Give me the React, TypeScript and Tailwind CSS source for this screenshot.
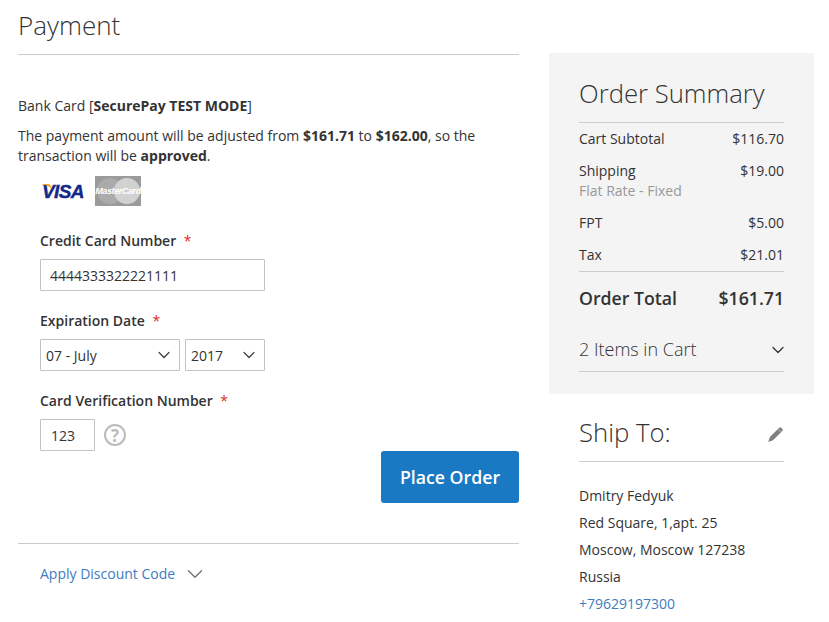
import { ChevronDown } from 'lucide-react';

const ROWS = [
    { label: 'Cart Subtotal', value: '$116.70' },
    { label: 'Shipping', sub: 'Flat Rate - Fixed', value: '$19.00' },
    { label: 'FPT', value: '$5.00' },
    { label: 'Tax', value: '$21.01' },
];

const ADDRESS = ['Dmitry Fedyuk', 'Red Square, 1,apt. 25', 'Moscow, Moscow 127238', 'Russia'];

function Field({ label, children }: { label: string; children: React.ReactNode }) {
    return (
        <div>
            <div className="h-[20px] leading-[20px] font-semibold text-[14px] text-[#333]">
                {label}
                <span className="ml-[4px] text-[#e02b27] font-normal"> *</span>
            </div>
            <div className="mt-[8px]">{children}</div>
        </div>
    );
}

function SelectBox({ value, width }: { value: string; width: string }) {
    return (
        <div className={`${width} h-[32px] border border-[#c2c2c2] rounded-[1px] flex items-center justify-between pl-[5px] pr-[5px] text-[14px] text-[#333]`}>
            <span>{value}</span>
            <ChevronDown className="w-[20px] h-[20px] text-[#444]" strokeWidth={1.5} />
        </div>
    );
}

function CardLogos() {
    return (
        <div className="ml-[24px] mt-[10px] h-[30px] flex items-center gap-[11px]">
            <div className="relative w-[42px] h-[30px] pt-[1px] flex items-center justify-center">
                <span className="text-[19px] leading-[18px] font-bold italic text-[#14288a] tracking-[-0.6px] [-webkit-text-stroke:0.4px_#14288a] font-['Liberation_Sans',sans-serif]">VISA</span>
                <svg className="absolute left-0 top-[8px]" width="10" height="6" viewBox="0 0 10 6">
                    <path d="M0 0h6.5q2 0 2.7 2.5l.4 2.5Q7 1.5 0 .6z" fill="#f2a51c" />
                </svg>
            </div>
            <div className="relative w-[46px] h-[30px] bg-[#9b9b9b] overflow-hidden flex items-center justify-center">
                <div className="absolute left-[2px] top-[2px] w-[26px] h-[26px] rounded-full bg-[#ababab]" />
                <div className="absolute left-[19px] top-[2px] w-[26px] h-[26px] rounded-full bg-[#d2d2d2]" />
                <span className="relative text-[9px] leading-[10px] font-bold italic text-white tracking-[-0.4px] font-['Liberation_Sans',sans-serif]">MasterCard</span>
            </div>
        </div>
    );
}

function PaymentColumn() {
    return (
        <div className="w-[501px] shrink-0">
            <h1 className="h-[55px] pt-[8px] border-b border-[#ccc] text-[26px] leading-[34px] font-light text-[#333]">Payment</h1>

            <p className="mt-[41px] text-[14px] leading-[20px] text-[#333]">
                Bank Card [<b className="font-bold">SecurePay TEST MODE</b>]
            </p>
            <p className="mt-[10px] text-[14px] leading-[20px] text-[#333]">
                The payment amount will be adjusted from <b className="font-bold">$161.71</b> to <b className="font-bold">$162.00</b>, so the transaction will be <b className="font-bold">approved</b>.
            </p>

            <CardLogos />

            <div className="ml-[22px] mt-[25px] flex flex-col gap-[20px]">
                <Field label="Credit Card Number">
                    <div className="w-[225px] h-[32px] border border-[#c2c2c2] rounded-[1px] pl-[9px] flex items-center text-[14px] text-[#333]">4444333322221111</div>
                </Field>
                <Field label="Expiration Date">
                    <div className="flex gap-[5px]">
                        <SelectBox value="07 - July" width="w-[140px]" />
                        <SelectBox value="2017" width="w-[80px]" />
                    </div>
                </Field>
                <Field label="Card Verification Number">
                    <div className="flex items-center gap-[9px]">
                        <div className="w-[55px] h-[32px] border border-[#c2c2c2] rounded-[1px] pl-[10px] flex items-center text-[14px] text-[#333]">123</div>
                        <div className="w-[22px] h-[22px] rounded-full border-2 border-[#bbb] flex items-center justify-center text-[17px] leading-none font-bold text-[#bbb]">?</div>
                    </div>
                </Field>
            </div>

            <div className="flex justify-end">
                <button className="h-[52px] w-[138px] bg-[#1979c3] rounded-[3px] text-white text-[17.7px] font-semibold">Place Order</button>
            </div>

            <div className="mt-[40px] border-t border-[#ccc] h-[59px] pl-[22px] flex items-center gap-[7px]">
                <span className="text-[14px] text-[#3f7cc0]">Apply Discount Code</span>
                <ChevronDown className="w-[26px] h-[26px] mt-[2px] text-[#757575]" strokeWidth={1.3} />
            </div>
        </div>
    );
}

function SummaryColumn() {
    return (
        <div className="w-[265px] shrink-0 ml-[30px] pt-[53px]">
            <div className="bg-[#f4f4f4] h-[341px] px-[30px] pt-[22px]">
                <h2 className="h-[48px] border-b border-[#ccc] text-[25.7px] leading-[38px] font-light text-[#333]">Order Summary</h2>
                <div className="pt-[6px] h-[149px] border-b border-[#ccc] flex flex-col gap-[12px] text-[14px] leading-[20px] text-[#333]">
                    {ROWS.map(r => (
                        <div key={r.label} className="flex justify-between">
                            <div>
                                <div>{r.label}</div>
                                {r.sub && <div className="text-[#999]">{r.sub}</div>}
                            </div>
                            <span>{r.value}</span>
                        </div>
                    ))}
                </div>
                <div className="h-[52px] flex items-center justify-between text-[17.7px] font-semibold text-[#333]">
                    <span>Order Total</span>
                    <span>$161.71</span>
                </div>
                <div className="h-[48px] pt-[4px] border-b border-[#ccc] flex items-center justify-between text-[18px] font-light text-[#333]">
                    <span>2 Items in Cart</span>
                    <ChevronDown className="w-[20px] h-[20px] -mr-[4px] text-[#333]" strokeWidth={1.5} />
                </div>
            </div>
            <div className="px-[30px]">
                <div className="h-[68px] pt-[20px] border-b border-[#ccc] flex items-start justify-between">
                    <span className="text-[25.7px] leading-[38px] font-light text-[#333]">Ship To:</span>
                    <svg className="mt-[12px]" width="17" height="17" viewBox="0 0 17 17">
                        <path d="M12.2 1.8q1-1 2-.1l1.2 1.2q.9 1-.1 2L6 14.2l-4.8 1.7 1.7-4.8z" fill="#808080" />
                        <path d="M11 3.2l3 3" stroke="#f4f4f4" strokeWidth="0.5" />
                    </svg>
                </div>
                <div className="mt-[20px] text-[14px] leading-[27px] text-[#333]">
                    {ADDRESS.map(line => <div key={line}>{line}</div>)}
                    <div className="text-[#3f7cc0]">+79629197300</div>
                </div>
            </div>
        </div>
    );
}

export default function App() {
    return (
        <div className="w-[829px] h-[622px] overflow-hidden bg-white pl-[18px] flex items-start font-['Open_Sans',sans-serif]">
            <PaymentColumn />
            <SummaryColumn />
        </div>
    );
}
